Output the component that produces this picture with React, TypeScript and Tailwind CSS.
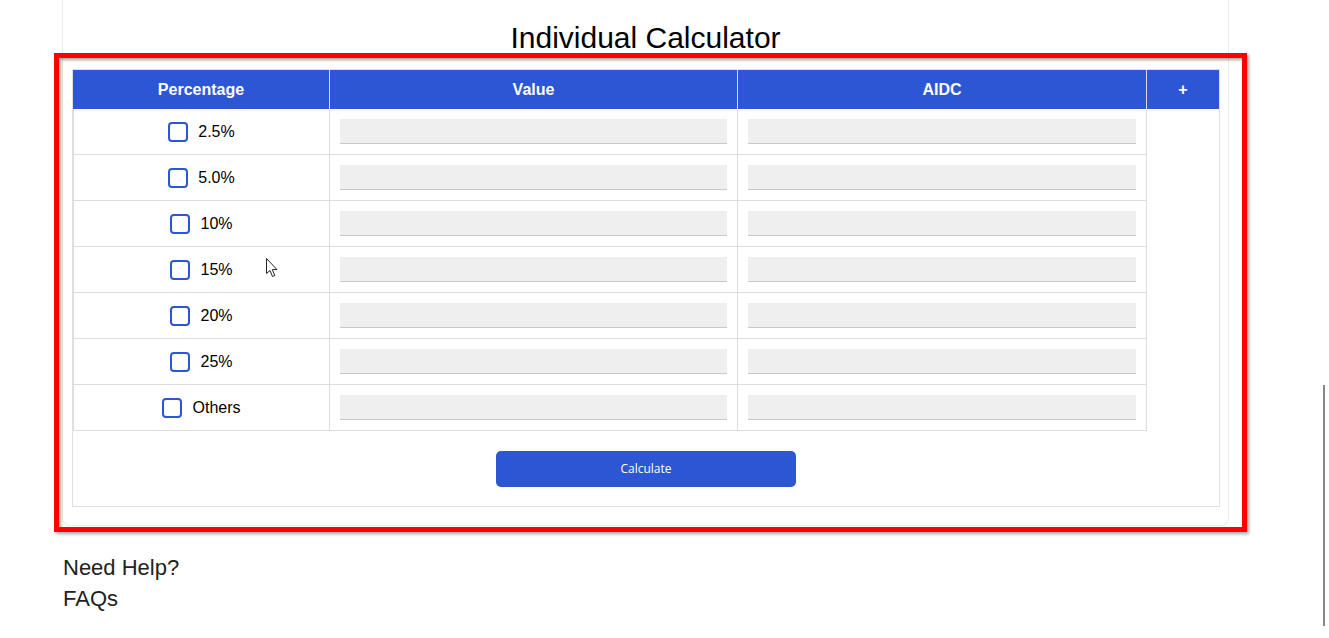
import React, { useState } from "react";

const rows = ["2.5%", "5.0%", "10%", "15%", "20%", "25%", "Others"];

const Checkbox = ({ checked, onChange }: { checked: boolean; onChange: () => void }) => (
  <button
    onClick={onChange}
    className={`h-[20px] w-[20px] rounded-[4px] border-2 border-[#2c56d3] ${checked ? "bg-[#2c56d3]" : "bg-white"}`}
    aria-label="select"
  />
);

const App = () => {
  const [checked, setChecked] = useState<Record<string, boolean>>({});

  const toggle = (key: string) => setChecked({ ...checked, [key]: !checked[key] });

  return (
    <div className="relative h-[638px] w-full overflow-hidden bg-white font-['Liberation_Sans',Arial,sans-serif] text-black">
      {/* main card */}
      <div className="ml-[62px] w-[1167px] rounded-b-[8px] border border-t-0 border-[#ececec] pb-[18px]">
        <h1 className="pt-[20px] mb-[13px] text-center text-[30px] leading-[36px] font-normal">
          Individual Calculator
        </h1>

        <div className="ml-[9px] w-[1148px] border border-[#e0e0e0]">
          {/* header */}
          <div className="flex h-[39px] bg-[#2c56d3] text-[16px] font-bold text-white">
            <div className="flex w-[257px] items-center justify-center border-r border-[#d8def5]">Percentage</div>
            <div className="flex w-[408px] items-center justify-center border-r border-[#d8def5]">Value</div>
            <div className="flex w-[409px] items-center justify-center border-r border-[#d8def5]">AIDC</div>
            <div className="flex w-[72px] items-center justify-center">+</div>
          </div>

          {/* body */}
          <div className="w-[1074px]">
            {rows.map((r) => (
              <div key={r} className="flex h-[46px] border-b border-l border-[#dcdcdc] text-[16px]">
                <div className="flex w-[256px] items-center justify-center gap-[10px] border-r border-[#dcdcdc]">
                  <Checkbox checked={!!checked[r]} onChange={() => toggle(r)} />
                  <span>{r}</span>
                </div>
                <div className="flex w-[408px] items-center border-r border-[#dcdcdc] px-[10px]">
                  <input className="h-[25px] w-full border-b border-[#c8c8c8] bg-[#efefef] outline-none" />
                </div>
                <div className="flex w-[409px] items-center border-r border-[#dcdcdc] px-[10px]">
                  <input className="h-[25px] w-full border-b border-[#c8c8c8] bg-[#efefef] outline-none" />
                </div>
              </div>
            ))}
          </div>

          <div className="flex justify-center pt-[20px] pb-[19px]">
            <button className="h-[36px] w-[300px] rounded-[5px] bg-[#2c56d3] font-['Open_Sans',sans-serif] text-[12px] text-white">
              Calculate
            </button>
          </div>
        </div>
      </div>

      <div className="ml-[63px] mt-[26px] text-[22px] leading-[31px] text-[#222]">
        <div>Need Help?</div>
        <div>FAQs</div>
      </div>

      {/* red highlight annotation */}
      <div className="pointer-events-none absolute left-[54px] top-[53px] h-[479px] w-[1193px] border-[5px] border-[#ff0000] shadow-[2px_2px_3px_rgba(0,0,0,0.35),inset_2px_2px_3px_rgba(0,0,0,0.35)]" />

      {/* mouse cursor */}
      <svg className="pointer-events-none absolute left-[266px] top-[258px]" width="13" height="20" viewBox="0 0 13 20">
        <path d="M0.5 0.5 L0.5 15.5 L4 12.5 L6.5 18.5 L8.8 17.5 L6.3 11.6 L11 11.6 Z" fill="white" stroke="#222" strokeWidth="1" />
      </svg>

      {/* scrollbar hint */}
      <div className="absolute left-[1323px] top-[385px] h-[241px] w-[2px] bg-[#868686]" />
    </div>
  );
};

export default App;
